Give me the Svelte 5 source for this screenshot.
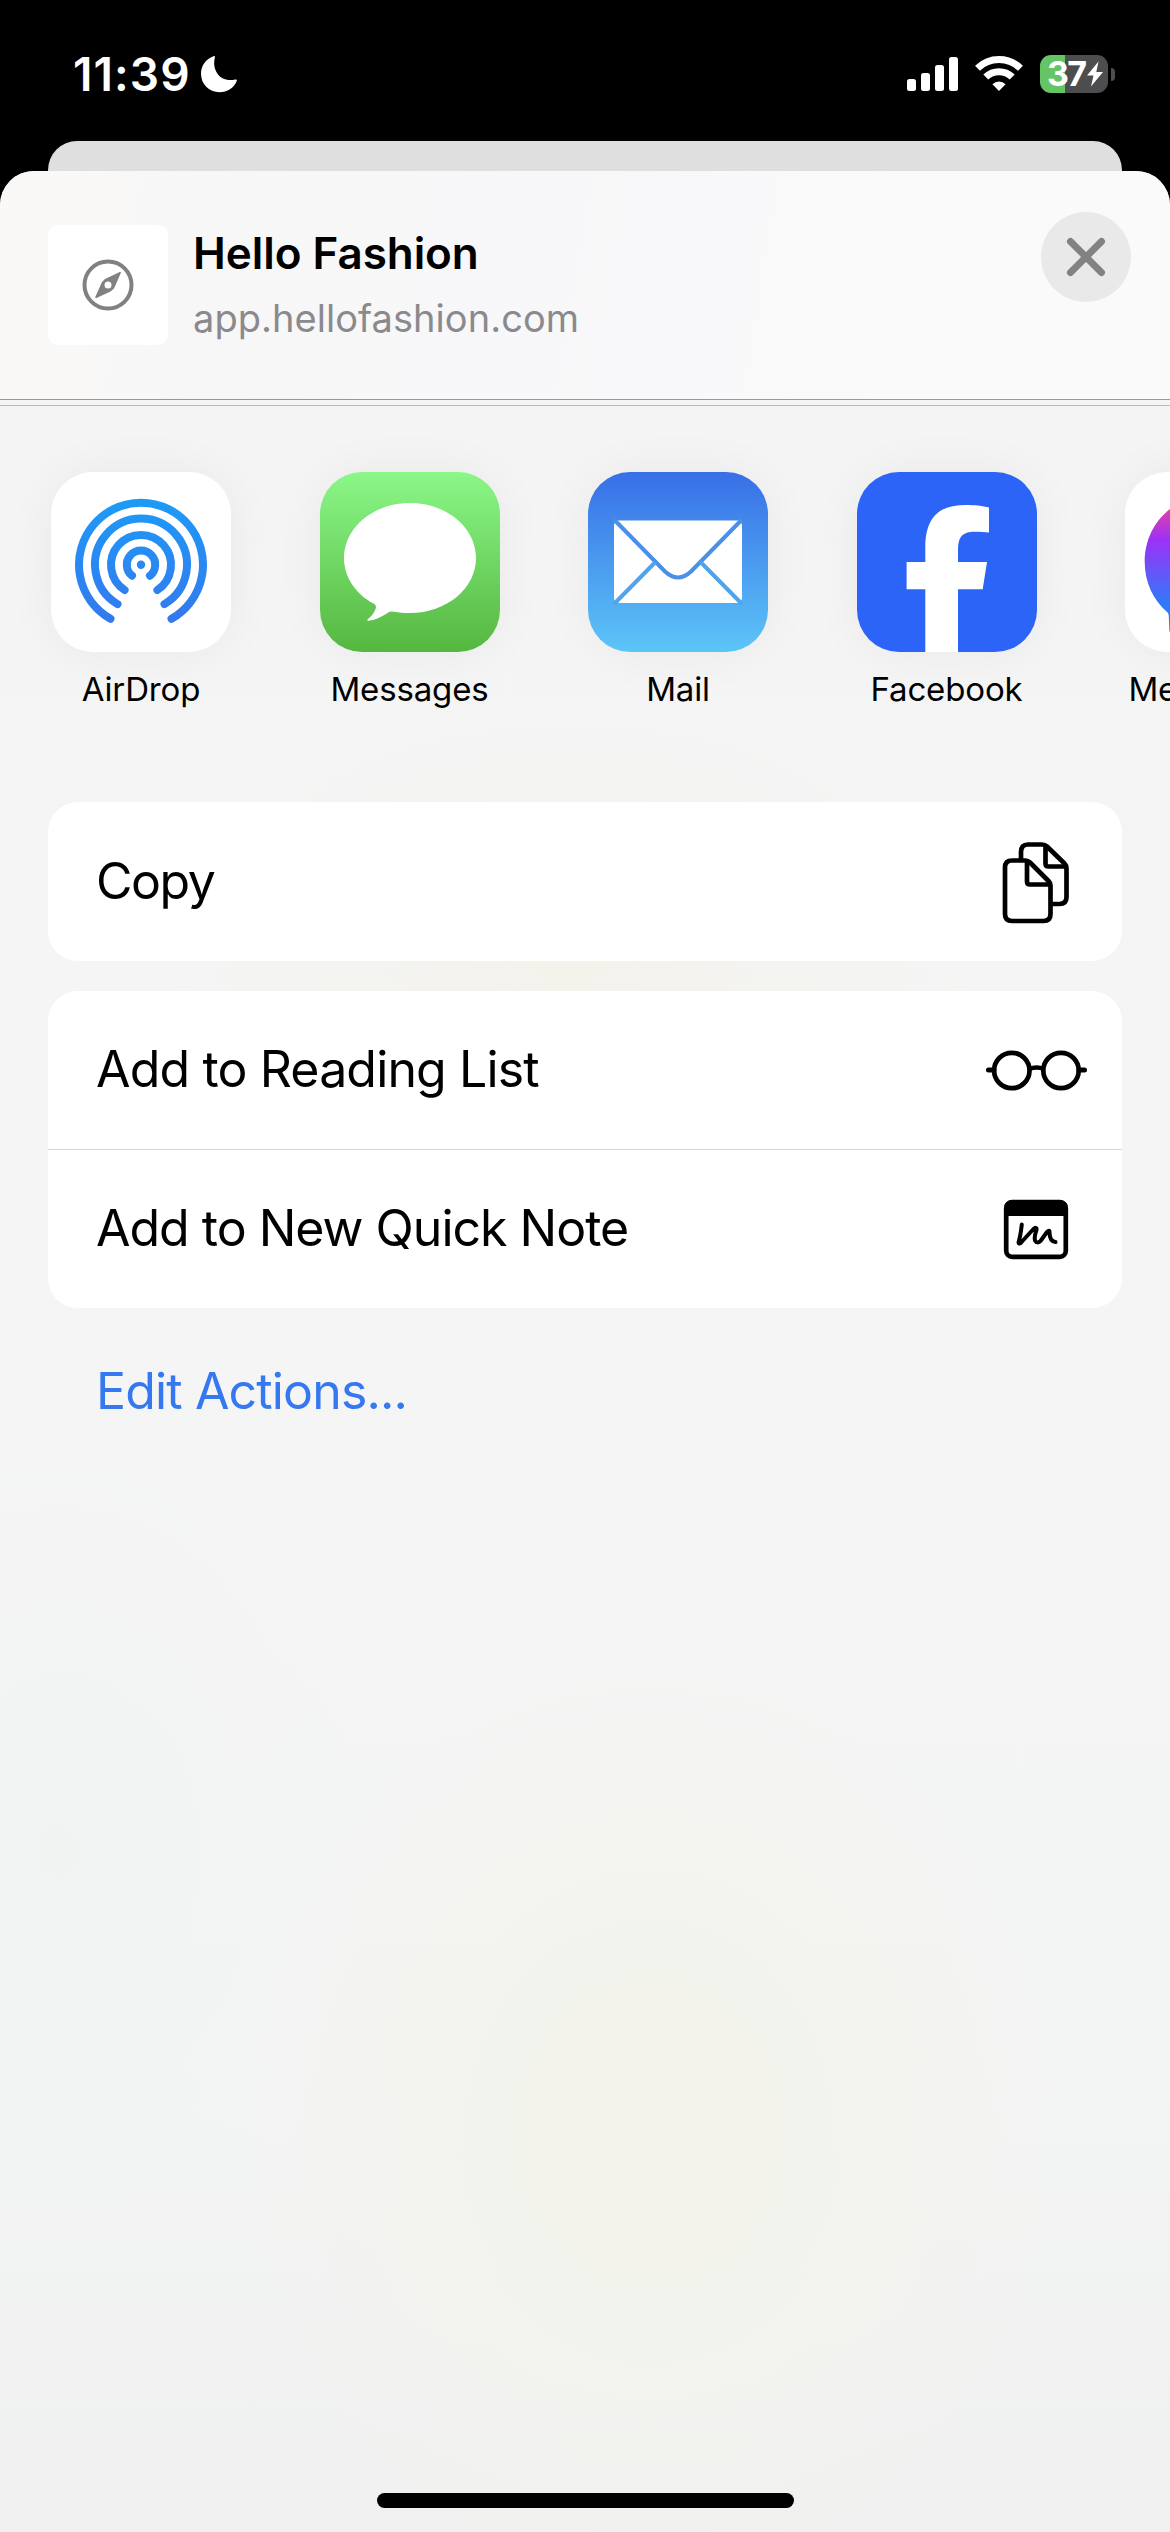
<script>
  // Apps offered in the horizontally scrolling share row.
  const apps = [
    { id: 'airdrop', label: 'AirDrop' },
    { id: 'messages', label: 'Messages' },
    { id: 'mail', label: 'Mail' },
    { id: 'facebook', label: 'Facebook' },
    { id: 'messenger', label: 'Messenger' }
  ];

  const groups = [
    [{ id: 'copy', label: 'Copy' }],
    [
      { id: 'reading', label: 'Add to Reading List' },
      { id: 'note', label: 'Add to New Quick Note' }
    ]
  ];
</script>

<div class="screen">
  <header class="status">
    <div class="left">
      <span class="time">11:39</span>
      <svg class="moon" width="38" height="38" viewBox="0 0 38 38">
        <path d="M13.5 1.2c.9-.4 1.7.3 1.4 1.2C11.600 15 20 27.800 35.200 24.500c1.200-.3 2 .4 1.600 1.500C33.800 33.200 27.300 37.200 19.500 37.200 8.800 37.200 1 29.300 1 18.600 1 10.500 6 4 13.500 1.200z" fill="#fff" />
      </svg>
    </div>
    <div class="right">
      <svg width="52" height="38" viewBox="0 0 52 38" fill="#fff">
        <rect x="0" y="24" width="9" height="12" rx="2.500" />
        <rect x="14" y="18" width="9" height="18" rx="2.500" />
        <rect x="28" y="10" width="9" height="26" rx="2.500" />
        <rect x="42" y="2" width="9" height="34" rx="2.500" />
      </svg>
      <svg class="wifi" width="48" height="38" viewBox="0 0 48 38">
        <g fill="none" stroke="#fff" stroke-width="7">
          <path d="M2.500 13.200A31 31 0 0 1 45.500 13.200" />
          <path d="M10.800 22.100A18.700 18.700 0 0 1 37.200 22.100" />
        </g>
        <path d="M17.400 29.200a9.500 9.500 0 0 1 13.200 0L24 36z" fill="#fff" />
      </svg>
      <div class="battery">
        <span>37</span>
        <svg width="18" height="26" viewBox="0 0 18 26">
          <path d="M12.500 0.500L1 14.500h6.500L5 25.500 17 11h-6.700z" fill="#fff" />
        </svg>
      </div>
      <i class="nub"></i>
    </div>
  </header>

  <div class="behind"></div>

  <main class="sheet">
    <section class="head">
      <div class="favicon">
        <svg width="52" height="52" viewBox="0 0 52 52">
          <circle cx="26" cy="26" r="23.500" fill="none" stroke="#818181" stroke-width="4" />
          <path fill-rule="evenodd" d="M37.700 13.100c1-.5 1.500 0 1 1.200L32 29.600 28.500 32.500 14.500 39c-1 .4-1.500-.3-1.100-1.200L20 23l3-3zM26 22.600a3.500 3.500 0 1 0 0 7 3.500 3.500 0 0 0 0-7z" fill="#818181" />
        </svg>
      </div>
      <div class="titles">
        <h1>Hello Fashion</h1>
        <p>app.hellofashion.com</p>
      </div>
      <button class="close" aria-label="Close">
        <svg width="40" height="40" viewBox="0 0 40 40">
          <path d="M4.500 4.500l31 31M35.500 4.500l-31 31" stroke="#828284" stroke-width="7" stroke-linecap="round" />
        </svg>
      </button>
    </section>

    <section class="apps">
      {#each apps as app (app.id)}
        <div class="app">
          <div class="tile {app.id}">
            <svg width="180" height="180" viewBox="0 0 180 180">
              {#if app.id === 'airdrop'}
                <defs>
                  <linearGradient id="air" gradientUnits="userSpaceOnUse" x1="0" y1="27" x2="0" y2="151">
                    <stop offset="0" stop-color="#1d9bf6" />
                    <stop offset="1" stop-color="#3478ee" />
                  </linearGradient>
                </defs>
                <g fill="none" stroke="url(#air)" stroke-width="8" stroke-linecap="round">
                  <path d="M59.500 146.700A62 62 0 1 1 120.500 146.700" />
                  <path d="M66.500 132.100A46 46 0 1 1 113.500 132.100" />
                  <path d="M73.600 118A30 30 0 1 1 106.400 118" />
                  <path d="M81 103.700A14.200 14.200 0 1 1 99 103.700" />
                </g>
                <circle cx="90" cy="92.700" r="4.200" fill="#2b87f1" />
              {:else if app.id === 'messages'}
                <path d="M90 31C53.500 31 24 55.600 24 86c0 19 11.500 35.800 29.500 45.600 2.400 1.300 2.900 3 2 5.500-1.500 4-4.300 7.700-7.700 10.200-.9.700-.6 1.600.6 1.500 8-.8 14-4.600 19.800-8.300 1.800-1.100 3.300-1.200 5.300-.8 5.200.9 10.800 1.300 16.500 1.300 36.500 0 66-24.600 66-55S126.500 31 90 31z" fill="#fff" />
              {:else if app.id === 'mail'}
                <rect x="26" y="48.500" width="128" height="82.500" rx="5" fill="#fff" />
                <g fill="none" stroke="#4a90e8" stroke-width="4">
                  <path d="M26 47.500L77 99.500Q90 111.500 103 99.500L154 47.500" />
                  <path d="M67.500 90L26 132M112.500 90L154 132" stroke="#51a4ec" />
                </g>
              {:else if app.id === 'facebook'}
                <path d="M68.300 180V117.300H49.600V90H68.300V76C68.300 46 81 33 109 33c8 0 17 .8 23 2.500V60.500c-4-.5-9-.7-14-.7C105 59.800 101 65 101 79V90H130L125.700 117.300H101V180z" fill="#fff" />
              {:else}
                <defs>
                  <linearGradient id="msgr" gradientUnits="userSpaceOnUse" x1="0" y1="22" x2="0" y2="158">
                    <stop offset="0" stop-color="#ff6066" />
                    <stop offset="0.13" stop-color="#d840b0" />
                    <stop offset="0.34" stop-color="#9b32f6" />
                    <stop offset="0.8" stop-color="#3478f8" />
                    <stop offset="1" stop-color="#1484f5" />
                  </linearGradient>
                </defs>
                <path d="M90 22C50 22 19.700 51 19.700 90c0 20.400 8.600 38 22.300 50 1.200 1 1.700 2.500 1.800 4l.5 14c.2 4 4 6.500 7.500 5l15-6.500C73 158 81 159 90 159c40 0 70-29.500 70-69S130 22 90 22z" fill="url(#msgr)" />
              {/if}
            </svg>
          </div>
          <span>{app.label}</span>
        </div>
      {/each}
    </section>

    <section class="actions">
      {#each groups as group}
        <div class="card">
          {#each group as row (row.id)}
            <div class="row">
              <span class="label {row.id}-label">{row.label}</span>
              <svg width="102" height="84" viewBox="0 0 102 84" fill="none" stroke="#000" stroke-width="4.700" stroke-linejoin="round">
                {#if row.id === 'copy'}
                  <path d="M35 20V12Q35 4.500 42 4.500H56Q59 4.500 61 6.500L78.500 23.500Q80.500 25.500 80.500 28.500V57Q80.500 64 73.500 64H66" />
                  <path d="M59.500 5.500V23.500Q59.500 26.500 62.500 26.500H79.500" />
                  <path d="M26 20.500H39.500Q42 20.500 44 22.500L62.500 41Q64.500 43 64.500 45.500V74Q64.500 81 57.500 81H26Q19 81 19 74V27.500Q19 20.500 26 20.500z" />
                  <path d="M41 21.500V41.500Q41 44.500 44 44.500H63.500" />
                {:else if row.id === 'reading'}
                  <circle cx="25.800" cy="42.500" r="17.700" />
                  <circle cx="75" cy="42.500" r="17.700" />
                  <path d="M43 41Q50.500 38 58 41" />
                  <path d="M2.500 42H8M93 42H98.500" stroke-width="5" stroke-linecap="round" />
                {:else}
                  <rect x="20.200" y="15.200" width="59.600" height="54.600" rx="6" />
                  <path d="M18.500 29V20Q18.500 14 24.500 14H75.500Q81.500 14 81.500 20V29z" fill="#000" stroke="none" />
                  <path d="M35.800 37.500Q34.500 49 32.500 55.500C33 57.500 34.500 56.500 36 54.500L47 42.500Q51 39 50.500 43Q48 50 49 53.500Q51 57 54.500 54L61 45Q63.500 42.500 63.500 45Q63.500 54.500 69.500 55" stroke-linecap="round" stroke-width="4" />
                {/if}
              </svg>
            </div>
          {/each}
        </div>
      {/each}
      <a class="edit" href="#edit">Edit Actions...</a>
    </section>

    <div class="home"></div>
  </main>
</div>

<style>
  :global(body) {
    background: #000;
  }

  .screen {
    width: 1170px;
    height: 2532px;
    display: flex;
    flex-direction: column;
    overflow: hidden;
    background: #000;
    color: #000;
    font-family: Inter, 'Liberation Sans', sans-serif;
  }

  svg {
    display: block;
    flex: none;
  }

  .status {
    box-sizing: border-box;
    height: 141px;
    padding: 55px 55px 0 73px;
    display: flex;
    justify-content: space-between;
    align-items: flex-start;
    color: #fff;
  }

  .left,
  .right {
    display: flex;
    height: 38px;
    align-items: center;
  }

  .time {
    width: 127px;
    font-size: 46px;
    font-weight: 600;
    line-height: 38px;
    letter-spacing: 1.1px;
  }

  .wifi {
    margin-left: 16px;
  }

  .battery {
    box-sizing: border-box;
    width: 68px;
    height: 38px;
    margin-left: 17px;
    padding: 0 4px 0 7px;
    display: flex;
    align-items: center;
    justify-content: space-between;
    border-radius: 11px;
    background: linear-gradient(90deg, #65c466 25px, #4d4d4f 25px);
    font-size: 34px;
    font-weight: 700;
    line-height: 38px;
    letter-spacing: -1.7px;
  }

  .nub {
    width: 4px;
    height: 13px;
    margin-left: 3px;
    border-radius: 0 4px 4px 0;
    background: #4d4d4f;
  }

  .behind {
    height: 30px;
    margin: 0 48px;
    border-radius: 29px 29px 0 0;
    background: #dfdfdf;
  }

  .sheet {
    flex: 1;
    display: flex;
    flex-direction: column;
    border-radius: 34px 34px 0 0;
    overflow: hidden;
    background:
      radial-gradient(ellipse 400px 460px at 650px 1960px, #f3f3eb 0%, #f3f3ed 35%, rgba(243, 243, 240, 0) 100%),
      radial-gradient(ellipse 400px 240px at 570px 790px, #f3f2eb 0%, rgba(243, 243, 238, 0) 100%),
      radial-gradient(ellipse 300px 400px at 60px 1680px, #f1f3f3 0%, rgba(241, 243, 243, 0) 100%),
      linear-gradient(#f4f4f4 0%, #f5f5f5 50%, #f3f4f4 80%, #f0f0f0 100%);
  }

  .head {
    box-sizing: border-box;
    height: 235px;
    padding: 54px 39px 0 48px;
    display: flex;
    align-items: flex-start;
    border-bottom: 1px solid #bcbcbc;
    background:
      linear-gradient(transparent 228px, #989898 228px, #989898 229px, #f5f5f5 229px),
      linear-gradient(100deg, #fbf9f7 0%, #f7f7f8 20%, #f8f8fa 55%, #fafafa 75%);
  }

  .favicon {
    width: 120px;
    height: 120px;
    display: grid;
    place-items: center;
    border-radius: 10px;
    background: #fff;
  }

  .titles {
    flex: 1;
    padding-left: 25px;
  }

  h1,
  p {
    margin: 0;
    white-space: nowrap;
  }

  h1 {
    font-size: 44px;
    font-weight: 600;
    line-height: 56px;
    letter-spacing: -0.05px;
  }

  p {
    margin-top: 9px;
    font-size: 38px;
    line-height: 56px;
    letter-spacing: 0.05px;
    color: #8a8a8e;
  }

  .close {
    width: 90px;
    height: 90px;
    margin-top: -13px;
    padding: 0;
    display: grid;
    place-items: center;
    border: 0;
    border-radius: 50%;
    background: #e9e9ea;
  }

  .apps {
    height: 396px;
    padding-top: 66px;
    padding-left: 51px;
    box-sizing: border-box;
    display: flex;
    gap: 88.500px;
  }

  .app {
    width: 180px;
    flex: none;
    display: flex;
    flex-direction: column;
    align-items: center;
  }

  .tile {
    width: 180px;
    height: 180px;
    border-radius: 42px;
    overflow: hidden;
    background: #fff;
    box-shadow: 0 0 50px rgba(0, 0, 0, 0.05);
  }

  .tile.messages {
    background: linear-gradient(#8bf788, #55b740);
  }

  .tile.mail {
    background: linear-gradient(#386fe7, #5cc5f7);
  }

  .tile.facebook {
    background: #2b64f6;
  }

  .app span {
    margin-top: 17px;
    font-size: 33px;
    line-height: 40px;
    letter-spacing: -0.15px;
    white-space: nowrap;
  }

  .actions {
    padding: 0 48px;
    display: flex;
    flex-direction: column;
    gap: 30px;
  }

  .card {
    border-radius: 30px;
    overflow: hidden;
    background: #fff;
  }

  .row {
    box-sizing: border-box;
    height: 159px;
    padding: 0 34px 0 48px;
    display: flex;
    align-items: center;
    justify-content: space-between;
  }

  .row:not(:last-child) {
    height: 158px;
  }

  .row + .row {
    border-top: 1px solid #d6d6d6;
  }

  .label,
  .edit {
    font-size: 50px;
    line-height: 60px;
    white-space: nowrap;
    letter-spacing: -0.85px;
  }

  .label {
    padding-bottom: 2px;
  }

  .copy-label {
    letter-spacing: -1.5px;
  }

  .note-label {
    letter-spacing: -1px;
  }

  .edit {
    margin: 23px 0 0 48px;
    color: #3578f0;
    text-decoration: none;
  }

  .home {
    width: 417px;
    height: 15px;
    margin: auto auto 24px;
    border-radius: 8px;
    background: #000;
  }
</style>
